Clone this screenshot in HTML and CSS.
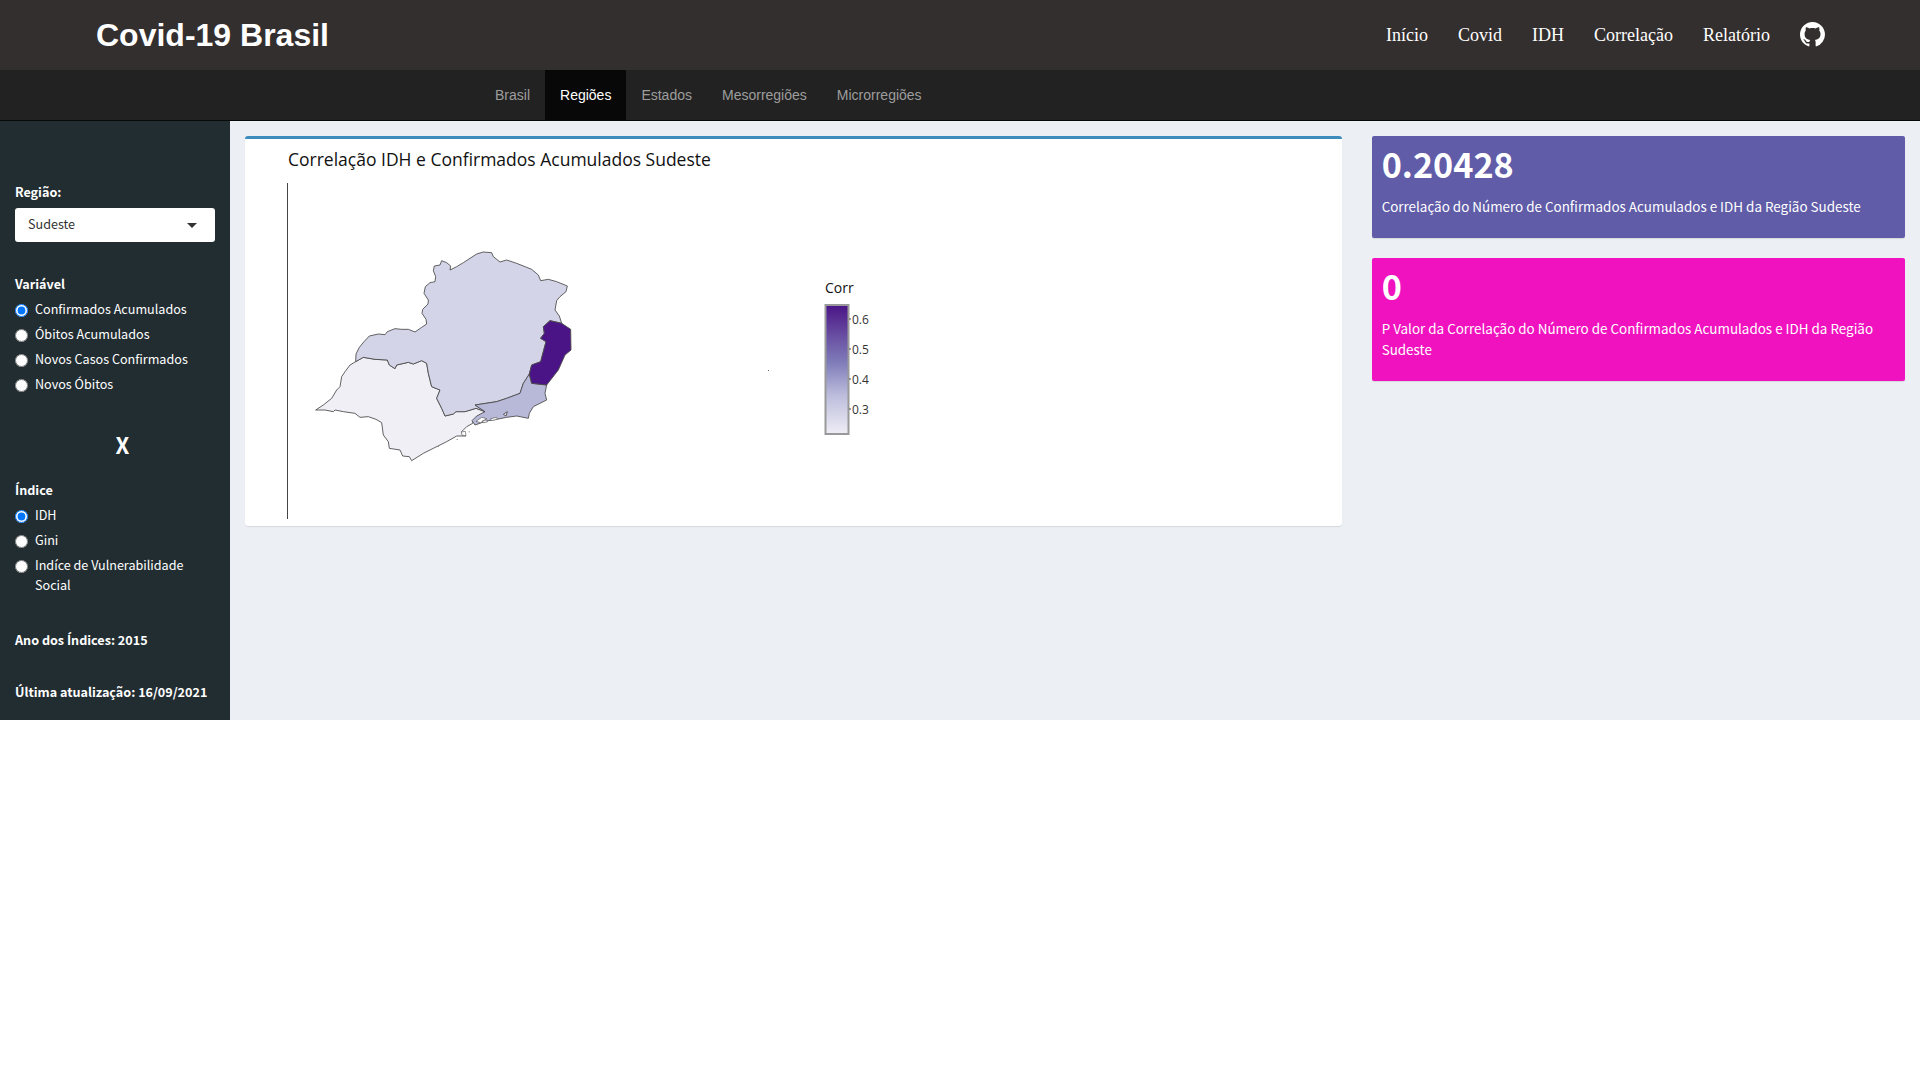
FILE: index.html
```html
<!DOCTYPE html>
<html lang="pt-BR">
<head>
  <meta charset="UTF-8">
  <title>Covid-19 Brasil</title>
  <link rel="stylesheet" href="styles.css">
</head>
<body>
  <!-- Top bar -->
  <header class="top-bar">
    <div class="brand">Covid-19 Brasil</div>
    <nav class="top-links">
      <a href="#">Início</a>
      <a href="#">Covid</a>
      <a href="#">IDH</a>
      <a href="#">Correlação</a>
      <a href="#">Relatório</a>
      <a href="#" class="github-link" aria-label="GitHub">
        <svg viewBox="0 0 16 16" width="25" height="25"><path fill="#fff" d="M8 0C3.58 0 0 3.58 0 8c0 3.54 2.29 6.53 5.47 7.59.4.07.55-.17.55-.38 0-.19-.01-.82-.01-1.49-2.01.37-2.53-.49-2.69-.94-.09-.23-.48-.94-.82-1.13-.28-.15-.68-.52-.01-.53.63-.01 1.08.58 1.23.82.72 1.21 1.87.87 2.33.66.07-.52.28-.87.51-1.07-1.78-.2-3.64-.89-3.64-3.95 0-.87.31-1.59.82-2.15-.08-.2-.36-1.02.08-2.12 0 0 .67-.21 2.2.82.64-.18 1.32-.27 2-.27.68 0 1.36.09 2 .27 1.53-1.04 2.2-.82 2.2-.82.44 1.1.16 1.92.08 2.12.51.56.82 1.27.82 2.15 0 3.07-1.87 3.75-3.65 3.95.29.25.54.73.54 1.48 0 1.07-.01 1.93-.01 2.2 0 .21.15.46.55.38A8.013 8.013 0 0016 8c0-4.42-3.58-8-8-8z"/></svg>
      </a>
    </nav>
  </header>

  <!-- Tabs -->
  <nav class="tab-bar">
    <a href="#" class="tab">Brasil</a>
    <a href="#" class="tab active">Regiões</a>
    <a href="#" class="tab">Estados</a>
    <a href="#" class="tab">Mesorregiões</a>
    <a href="#" class="tab">Microrregiões</a>
  </nav>

  <div class="layout">
    <!-- Sidebar -->
    <aside class="sidebar">
      <div class="field-label first-label">Região:</div>
      <div class="select-box">
        <span class="select-text">Sudeste</span>
        <span class="caret"></span>
      </div>

      <div class="field-label variable-label">Variável</div>
      <label class="radio-row"><input type="radio" name="variavel" checked><span>Confirmados Acumulados</span></label>
      <label class="radio-row"><input type="radio" name="variavel"><span>Óbitos Acumulados</span></label>
      <label class="radio-row"><input type="radio" name="variavel"><span>Novos Casos Confirmados</span></label>
      <label class="radio-row"><input type="radio" name="variavel"><span>Novos Óbitos</span></label>

      <div class="cross">X</div>

      <div class="field-label">Índice</div>
      <label class="radio-row"><input type="radio" name="indice" checked><span>IDH</span></label>
      <label class="radio-row"><input type="radio" name="indice"><span>Gini</span></label>
      <label class="radio-row"><input type="radio" name="indice"><span>Indíce de Vulnerabilidade Social</span></label>

      <div class="field-label year-label">Ano dos Índices: 2015</div>
      <div class="field-label update-label">Última atualização: 16/09/2021</div>
    </aside>

    <!-- Main Content -->
    <main class="main-content">
      <div class="col-chart">
        <div class="chart-card">
          <svg class="chart" width="100%" height="387">
            <text class="chart-title" x="43" y="27">Correlação IDH e Confirmados Acumulados Sudeste</text>
            <line x1="42.5" y1="44" x2="42.5" y2="380" stroke="#444" stroke-width="1"/>

            <!-- Map of the Sudeste region -->
            <svg x="55" y="91" width="300" height="240" viewBox="0 0 900 720">
              <g stroke="#4a4a4a" stroke-width="2.6" stroke-linejoin="round">
                <polygon fill="#f0eff6" points="167,395 190,382 225,388 262,390 268,405 285,416 290,405 325,397 340,402 365,392 380,400 385,430 395,470 420,480 410,505 425,535 435,558 460,552 468,545 495,545 528,535 555,545 545,558 520,570 518,580 500,590 485,605 498,618 470,618 440,635 400,655 370,670 335,692 328,680 308,678 300,660 268,655 265,635 250,615 245,578 228,568 205,560 180,562 165,550 130,545 105,540 100,545 75,540 47,540 70,525 95,505 110,480 120,470 125,440 135,425 150,405"/>
                <polygon fill="#d3d4e7" points="167,395 168,372 178,352 192,335 208,318 235,312 255,314 262,305 285,296 305,298 325,298 345,306 365,292 380,282 378,268 366,250 368,238 384,222 385,210 372,190 376,170 390,158 405,155 407,140 400,122 403,108 420,105 425,92 440,98 452,108 450,120 470,110 490,98 510,85 530,72 550,66 575,68 580,80 600,96 620,90 650,100 680,112 695,118 715,135 722,152 745,148 770,155 802,168 798,185 780,200 770,212 765,240 778,258 785,280 750,272 730,290 733,310 722,325 738,335 722,395 695,405 688,432 670,460 660,490 620,505 590,515 525,525 555,545 528,535 495,545 468,545 460,552 435,558 425,535 410,505 420,480 395,470 385,430 380,400 365,392 340,402 325,397 290,405 285,416 268,405 262,390 225,388 190,382"/>
                <polygon fill="#b8b9d9" points="525,525 590,515 620,505 660,490 670,460 688,432 695,460 740,465 735,490 740,510 700,530 688,550 685,565 650,558 620,562 590,568 565,572 545,578 525,585 516,572 530,558 555,545"/>
                <polygon fill="#4a1486" points="750,272 785,280 812,298 813,360 795,375 775,420 740,465 695,460 688,432 695,405 722,395 738,335 722,325 733,310 730,290"/>
                <polygon fill="#f0eff6" points="610,553 622,545 618,558"/>
              </g>
              <!-- Coast details -->
              <g stroke="#4a4a4a" stroke-width="1.8" fill="#ffffff">
                <polygon points="528,574 545,562 560,566 542,578"/>
                <polygon points="548,572 560,570 562,576 550,578"/>
                <polygon points="572,566 590,562 592,568 574,572"/>
                <polygon points="484,606 496,604 498,617 486,616"/>
              </g>
              <g fill="#777777">
                <rect x="506" y="604" width="3" height="3"/>
                <rect x="470" y="627" width="3" height="3"/>
                <rect x="414" y="649" width="3" height="2"/>
              </g>
            </svg>

            <rect x="523" y="231" width="1" height="1" fill="#666"/>

            <!-- Legend -->
            <text class="legend-title" x="580" y="154">Corr</text>
            <defs>
              <linearGradient id="purples" x1="0" y1="0" x2="0" y2="1">
                <stop offset="0" stop-color="#4a1486"/>
                <stop offset="0.25" stop-color="#6a51a3"/>
                <stop offset="0.45" stop-color="#807dba"/>
                <stop offset="0.7" stop-color="#bcbddc"/>
                <stop offset="1" stop-color="#efedf5"/>
              </linearGradient>
            </defs>
            <rect x="580.5" y="166" width="23" height="129" fill="url(#purples)" stroke="#999" stroke-width="2"/>
            <g stroke="#444" stroke-width="1">
              <line x1="604" y1="180" x2="606" y2="180"/>
              <line x1="604" y1="210" x2="606" y2="210"/>
              <line x1="604" y1="240" x2="606" y2="240"/>
              <line x1="604" y1="270" x2="606" y2="270"/>
            </g>
            <text class="legend-tick" x="607" y="185">0.6</text>
            <text class="legend-tick" x="607" y="215">0.5</text>
            <text class="legend-tick" x="607" y="245">0.4</text>
            <text class="legend-tick" x="607" y="275">0.3</text>
          </svg>
        </div>
      </div>

      <div class="col-boxes">
        <div class="value-box purple">
          <h3>0.20428</h3>
          <p>Correlação do Número de Confirmados Acumulados e IDH da Região Sudeste</p>
        </div>
        <div class="value-box pink">
          <h3>0</h3>
          <p>P Valor da Correlação do Número de Confirmados Acumulados e IDH da Região Sudeste</p>
        </div>
      </div>
    </main>
  </div>
</body>
</html>
```

FILE: styles.css
```css
/* General Reset and Layout */
body {
  margin: 0;
  background-color: #ffffff;
  font-family: "Noto Sans CJK SC", "Lato", sans-serif;
}

a {
  text-decoration: none;
}

/* Top bar */
.top-bar {
  height: 70px;
  background-color: #342f2f;
  display: flex;
  justify-content: space-between;
  align-items: center;
  padding: 0 95px 0 96px;
}

.brand {
  font-family: "Liberation Sans", Arial, sans-serif;
  font-size: 32px;
  font-weight: bold;
  color: #ffffff;
}

.top-links {
  display: flex;
  align-items: center;
  gap: 30px;
  font-family: "Liberation Serif", "Times New Roman", serif;
  font-size: 18px;
}

.top-links a {
  color: #ffffff;
}

.github-link {
  display: flex;
  margin-top: -2px;
}

/* Tabs */
.tab-bar {
  height: 50px;
  background-color: #222222;
  border-bottom: 1px solid #080808;
  display: flex;
  padding-left: 480px;
  font-family: "Liberation Sans", Arial, sans-serif;
  font-size: 14px;
}

.tab {
  padding: 0 15px;
  line-height: 50px;
  color: #9d9d9d;
}

.tab.active {
  background-color: #080808;
  color: #ffffff;
}

.layout {
  display: flex;
  height: 599px;
}

/* Sidebar */
.sidebar {
  width: 230px;
  box-sizing: border-box;
  flex: none;
  background-color: #222d32;
  color: #ffffff;
  padding: 0 15px;
  font-size: 12.6px;
  line-height: 20px;
}

.field-label {
  font-weight: bold;
  margin-bottom: 5px;
}

.first-label {
  margin-top: 61px;
  margin-bottom: 6px;
}

.select-box {
  height: 34px;
  box-sizing: border-box;
  background-color: #ffffff;
  border-radius: 3px;
  color: #333333;
  display: flex;
  justify-content: space-between;
  align-items: center;
  padding: 0 18px 0 13px;
}

.select-text {
  padding-bottom: 2px;
}

.caret {
  width: 0;
  height: 0;
  border-left: 5px solid transparent;
  border-right: 5px solid transparent;
  border-top: 5px solid #333333;
}

.variable-label {
  margin-top: 32px;
}

.radio-row {
  display: flex;
  align-items: flex-start;
  margin-bottom: 5px;
}

.radio-row input {
  flex: none;
  width: 13px;
  height: 13px;
  margin: 5px 7px 0 0;
}

.cross {
  font-size: 22px;
  font-weight: bold;
  line-height: 30px;
  text-align: center;
  padding-left: 15px;
  margin-top: 35px;
  margin-bottom: 21px;
}

.year-label {
  margin-top: 35px;
}

.update-label {
  margin-top: 32px;
}

/* Main Content */
.main-content {
  flex: 1;
  background-color: #ecf0f5;
  display: flex;
  align-items: flex-start;
  padding: 15px 0 0;
}

.col-chart {
  width: 66.6667%;
  box-sizing: border-box;
  padding: 0 15px;
}

.col-boxes {
  width: 33.3333%;
  box-sizing: border-box;
  padding: 0 15px;
}

.chart-card {
  background-color: #ffffff;
  border-top: 3px solid #3c8dbc;
  border-radius: 3px;
  box-shadow: 0 1px 1px rgba(0, 0, 0, 0.1);
}

.chart {
  display: block;
}

.chart-title {
  font-family: "Open Sans", sans-serif;
  font-size: 17.5px;
  fill: #111111;
}

.legend-title {
  font-family: "Open Sans", sans-serif;
  font-size: 14px;
  fill: #111111;
}

.legend-tick {
  font-family: "Open Sans", sans-serif;
  font-size: 12px;
  fill: #333333;
}

.value-box {
  border-radius: 2px;
  box-shadow: 0 1px 1px rgba(0, 0, 0, 0.1);
  color: #ffffff;
  padding: 6px 10px 10px;
  margin-bottom: 20px;
}

.value-box.purple {
  background-color: #605ca8;
}

.value-box.pink {
  background-color: #f012be;
}

.value-box h3 {
  margin: 0 0 12px;
  font-size: 34.2px;
  font-weight: bold;
  line-height: 42px;
}

.value-box p {
  margin: 0 0 11px;
  font-size: 13.43px;
  line-height: 21px;
}
```
